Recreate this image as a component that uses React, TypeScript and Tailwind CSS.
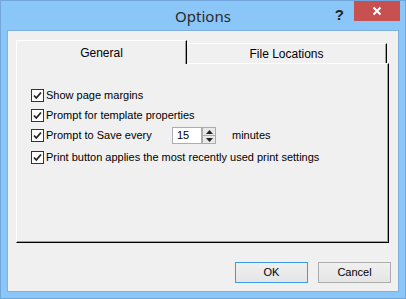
const Check = () => (
  <div className="w-[13px] h-[13px] border border-[#333] bg-white flex items-center justify-center shrink-0">
    <svg width="9" height="9" viewBox="0 0 9 9">
      <path d="M1 4.5 L3.3 7 L8 1.5" fill="none" stroke="#222" strokeWidth="1.8" />
    </svg>
  </div>
);

const Row = ({ label, className = "" }: { label: string; className?: string }) => (
  <div className={`flex items-center gap-[2px] h-[14px] ${className}`}>
    <Check />
    <span>{label}</span>
  </div>
);

const Spin = () => (
  <div className="flex h-[17px]">
    <div className="w-[30px] h-[17px] border border-[#abadb3] bg-white pl-[4px] flex items-center">15</div>
    <div className="w-[14px] h-[17px] flex flex-col">
      <div className="flex-1 border border-[#acacac] bg-[#e8e8e8] flex items-center justify-center">
        <svg width="7" height="4" viewBox="0 0 7 4"><path d="M0 4 L3.5 0 L7 4 Z" fill="#222" /></svg>
      </div>
      <div className="flex-1 border border-t-0 border-[#acacac] bg-[#e8e8e8] flex items-center justify-center">
        <svg width="7" height="4" viewBox="0 0 7 4"><path d="M0 0 L3.5 4 L7 0 Z" fill="#222" /></svg>
      </div>
    </div>
  </div>
);

const App = () => {
  return (
    <div
      className="w-[406px] h-[299px] bg-[#8bc6f8] border border-[#72a6da] flex flex-col"
      style={{ fontFamily: "'Liberation Sans', Arial, sans-serif" }}
    >
      <div className="h-[29px] flex items-start relative">
        <div className="flex-1 text-center text-[15px] text-[#2a2a2a] pt-[4px]" style={{ fontFamily: "'Noto Sans', sans-serif" }}>
          Options
        </div>
        <div className="absolute right-[61px] top-[3px] text-[15px] font-bold text-[#222]">?</div>
        <div className="absolute right-[5px] top-0 w-[46px] h-[20px] bg-[#c75050] flex items-center justify-center">
          <svg width="10" height="10" viewBox="0 0 10 10">
            <path d="M1.5 1.5 L8.5 8.5 M8.5 1.5 L1.5 8.5" stroke="#fff" strokeWidth="2" />
          </svg>
        </div>
      </div>
      <div className="mx-[6px] h-[262px] border border-[#7fb0e0] bg-[#f0f0f0] flex flex-col pl-[8px] pr-[7px] pt-[8px] text-[11px] text-black">
        <div className="flex items-end h-[24px]">
          <div className="relative z-10 -mb-px w-[171px] h-[24px] bg-[#f0f0f0] border-t border-l border-white border-r border-r-black shadow-[inset_-1px_0_0_#a0a0a0] flex items-center justify-center text-[12px]">
            General
          </div>
          <div className="w-[200px] h-[20px] border-t border-white border-r border-r-black shadow-[inset_-1px_0_0_#a0a0a0] flex items-center justify-center text-[12px]">
            File Locations
          </div>
        </div>
        <div className="w-[373px] h-[180px] border-t border-l border-white border-r border-b border-r-black border-b-black shadow-[inset_-1px_-1px_0_#a0a0a0] pl-[14px] pt-[24px]">
          <Row label="Show page margins" />
          <Row label="Prompt for template properties" className="mt-[6px]" />
          <div className="flex items-center mt-[5px] h-[17px]">
            <Row label="Prompt to Save every" className="w-[141px]" />
            <Spin />
            <span className="ml-[16px]">minutes</span>
          </div>
          <Row label="Print button applies the most recently used print settings" className="mt-[6px]" />
        </div>
        <div className="flex justify-end gap-[10px] mt-[19px]">
          <div className="w-[73px] h-[21px] border border-[#3c9be8] bg-gradient-to-b from-[#f0f0f0] to-[#e5e5e5] flex items-center justify-center">OK</div>
          <div className="w-[73px] h-[21px] border border-[#acacac] bg-gradient-to-b from-[#f0f0f0] to-[#e5e5e5] flex items-center justify-center">Cancel</div>
        </div>
      </div>
    </div>
  );
};

export default App;
